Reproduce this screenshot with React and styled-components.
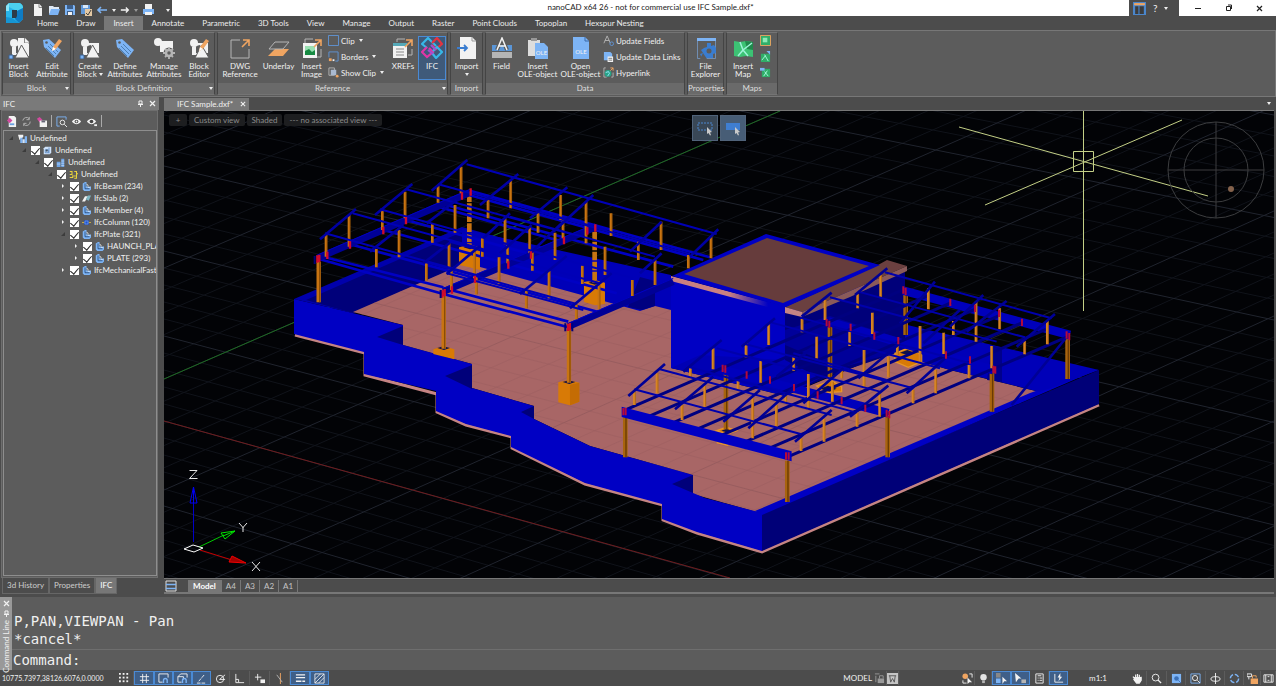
import React from "react"
import styled, { createGlobalStyle } from "styled-components"

const GlobalStyle = createGlobalStyle`
  * {
    box-sizing: border-box;
  }
  body {
    margin: 0;
    background: #4c4c4c;
    color: #f0f0f0;
    font-family: Lato, "Open Sans", sans-serif;
    font-size: 8px;
    line-height: 8px;
  }
  button, input {
    font: inherit;
    color: inherit;
    margin: 0;
    padding: 0;
    border: none;
    background: none;
  }
  svg {
    display: block;
    flex: none;
  }
`

/* ---------- icons ---------- */

const W = "#f2f2f2"
const B = "#7db4f5"
const O = "#f0a561"
const G = "#b5b5b5"

const Glyph = ({ s = 12, v = 12, children }) => (
  <svg width={s} height={s} viewBox={`0 0 ${v} ${v}`} fill="none">
    {children}
  </svg>
)

const Shapes = () => (
  <g fill={W}>
    <circle cx="6" cy="6" r="4" />
    <path d="M8 6h12v10H8zM4 10v8h8V8z" />
    <path d="M13.500 8l7.500 13H7z" stroke="#5c5c5c" />
  </g>
)
const Pencil = () => (
  <g>
    <path d="M12 10l6-8 3 2-6 8-4 2z" fill={O} />
    <path d="M12 10l3 2-4 2z" fill="#fff" />
  </g>
)
const Tag = () => (
  <g>
    <path d="M2 3l6-1 12 11-6 8L3 10z" fill={B} />
    <path d="M7 9l8 8M9 7l8 8M5 11l8 8" stroke="#41719f" strokeWidth=".8" />
    <circle cx="5.500" cy="5.500" r="1.300" fill="#5c5c5c" />
  </g>
)
const Corner = () => (
  <path d="M14 3h6v6M20 3l-7 7" stroke={O} strokeWidth="1.600" />
)
const MapTile = () => (
  <g>
    <path d="M2 4l6 1 6-1 7 1v15l-7-1-6 1-6-1z" fill="#3cc274" />
    <path d="M13 4l8 1v8l-6-1z" fill="#20884c" />
    <path d="M8 5l3 8-5 6M11 13l9-7M11 13l5 6" stroke="#9ef2d8" strokeWidth="1.500" />
  </g>
)

const big = {
  insertBlock: (
    <>
      <path d="M10 1h7l4 4v14H10z" fill={W} />
      <path d="M16.500 1v5H21" stroke="#888" />
      <Shapes />
      <path d="M1 18h4v4H1z" fill={B} stroke="#3c5f8a" />
    </>
  ),
  editAttr: (
    <>
      <Tag />
      <Pencil />
    </>
  ),
  createBlock: (
    <>
      <Shapes />
      <path d="M1 18h4v4H1z" fill={B} stroke="#3c5f8a" />
    </>
  ),
  define: <Tag />,
  manage: (
    <>
      <circle cx="5" cy="5" r="4" fill={W} />
      <path d="M7 4h13v11H7z" fill={W} />
      <circle cx="16" cy="16" r="5.500" fill="#5c5c5c" />
      <path
        d="M16 10v12M10 16h12M12 12l8 8M20 12l-8 8"
        stroke={G}
        strokeWidth="1.800"
      />
      <circle cx="16" cy="16" r="3" stroke={G} strokeWidth="2.500" fill="#5c5c5c" />
    </>
  ),
  editor: (
    <>
      <Shapes />
      <Pencil />
    </>
  ),
  dwg: (
    <>
      <path d="M11 3H2v18h18V12" stroke={G} />
      <Corner />
    </>
  ),
  underlay: (
    <>
      <path d="M7 12h14l-6 7H0z" fill={O} />
      <path d="M7 5h14l-6 7H1z" fill="#5c5c5c" stroke={G} />
    </>
  ),
  image: (
    <>
      <path d="M4 6V2h8M20 12v8h-4" stroke={G} />
      <path d="M2 6h14v15H2z" fill={W} />
      <path d="M4 9h10v9H4z" fill="#9ae0b2" />
      <path d="M4 18v-4l4-2 3 3 3-2v5z" fill="#178a42" />
      <Corner />
    </>
  ),
  xrefs: (
    <>
      <path d="M5 5V2h8M20 12v6h-4" stroke={G} />
      <path d="M1 6h14v15H1z" fill={W} />
      <path d="M1 6h14v3H1z" fill="#55a9b8" />
      <path d="M4 12h8M4 15h8M4 18h8" stroke="#888" />
      <Corner />
    </>
  ),
  ifc: (
    <g strokeWidth="2.200">
      <path d="M6 11L1 7l6-6 5 5 3 3" stroke="#37b8e8" />
      <path d="M11 6l5-5 5 6-6 5-4-4" stroke="#e5333f" />
      <path d="M6 10l-5 5 5 5 6-5-4-4" stroke="#e236a6" />
      <path d="M11 16l4 5 6-6-5-5-4 4" stroke="#37b8e8" />
      <path d="M7 13l5 4M10 8l5 5" stroke="#a34fd0" />
    </g>
  ),
  import: (
    <>
      <path d="M4 0h12l4 4v18H4z" fill={W} />
      <path d="M16 0v4h4" stroke="#999" />
      <path d="M1 11h10M8 8l3 3-3 3" stroke="#3a7dd0" strokeWidth="1.800" />
    </>
  ),
  field: (
    <>
      <path d="M1 8h20v6H1z" fill="#5a96d8" />
      <path d="M1 15h20v6H1z" fill={G} />
      <path d="M6 13l5-12 5 12" stroke="#5c5c5c" strokeWidth="4" />
      <path d="M6 13l5-12 5 12M7 9h8" stroke={W} strokeWidth="1.500" />
    </>
  ),
  insertOle: (
    <>
      <path d="M1 3h12v16H1z" fill="#ddd" />
      <path d="M4 1h6v3H4z" fill="#999" />
      <path d="M8 6h9l4 4v12H8z" fill={B} />
      <text x="14.500" y="18" fontSize="6" textAnchor="middle" fill={W}>
        OLE
      </text>
    </>
  ),
  openOle: (
    <>
      <path d="M3 0h12l4 4v18H3z" fill={B} />
      <path d="M15 0v4h4" stroke="#3c6ba8" />
      <text x="11" y="17" fontSize="6" textAnchor="middle" fill={W}>
        OLE
      </text>
    </>
  ),
  explorer: (
    <>
      <path d="M2.500 2.500h18v19h-18z" stroke="#7599c8" strokeWidth=".8" />
      <path d="M2 1h19v3H2z" fill={B} />
      <path
        d="M12 6h4v3l3-1 2 3v5l-3 1v4H7l-2-4 3-1-2-3 3-2 3-1z"
        fill="#3a7dd0"
      />
      <circle cx="14" cy="14" r="2.500" fill="#5c5c5c" />
      <path d="M5 22l3-6 4 6z" fill="#5c5c5c" />
    </>
  ),
  map: <MapTile />,
}

const small = {
  clip: <path d="M.5 .5h11v11H.5z" stroke="#5f95d8" />,
  borders: (
    <>
      <path d="M1 7V1h10v10H8" stroke="#5f95d8" />
      <path d="M1 8h3v3H1z" fill={O} />
      <path d="M5 9h2v2H5z" fill={W} />
    </>
  ),
  showClip: (
    <>
      <path d="M1 1h6v8H1z" stroke={G} />
      <path d="M3 3h6v6H3z" fill="#a9b9d0" />
      <circle cx="10" cy="10" r="1.500" fill={O} />
    </>
  ),
  updFields: (
    <>
      <path d="M1 9l3.500-8L8 9M2 6h5" stroke={G} />
      <circle cx="9.500" cy="9.500" r="2" stroke="#5f95d8" />
    </>
  ),
  updLinks: (
    <>
      <path d="M1 1h7l2 2v7H1z" fill={B} />
      <path d="M5 6h6v6H5z" fill={W} />
      <path d="M6 8h4M6 10h4" stroke="#555" strokeWidth=".8" />
    </>
  ),
  link: (
    <>
      <path d="M3 1H1v10h3M11 6v5H9" stroke={G} />
      <circle cx="5.500" cy="7" r="3.700" fill="#27a387" />
      <path d="M3 6l3-1 1 2-2 3" stroke="#9ee8ff" />
      <path d="M8 1h3v3M11 1L8 4" stroke={O} />
    </>
  ),
  map1: (
    <>
      <path d="M.5 .5h11v11H.5z" fill="#31ad68" stroke={O} />
      <path d="M3 3h5v5H3z" fill="#8eeab8" />
    </>
  ),
  map2: (
    <>
      <path d="M1 3h10v9H1z" fill="#31ad68" />
      <path d="M2 10l4-5M5 4l4 7" stroke="#a8ffe0" />
      <path d="M7 0h4v4z" fill={B} />
    </>
  ),
  map3: (
    <>
      <path d="M2 2h9v9H2z" fill="#31ad68" />
      <path d="M4 10l4-6M5 5l4 5" stroke="#a8ffe0" />
      <path d="M0 1h5v3H0z" fill={B} />
    </>
  ),
  newFile: (
    <>
      <path d="M2 0h5.500L10 3v9H2z" fill={W} />
      <path d="M7 0v3.500h3" stroke="#888" />
    </>
  ),
  open: (
    <>
      <path d="M1 10V2h4l1 1h5v2" fill="#dfe9f5" />
      <path d="M3 5h9l-2 6H1z" fill={B} />
    </>
  ),
  save: (
    <>
      <path d="M1 1h9l1 1v9H1z" fill={B} />
      <path d="M3 1h6v4H3zM3 7h6v4H3z" fill="#3e5f8a" />
      <path d="M4 8h4v3H4z" fill={W} />
    </>
  ),
  saveAll: (
    <>
      <path d="M1 1h9v9H1z" fill="#6298d8" />
      <path d="M3 1h5v3H3z" fill="#d9e7f7" />
      <path d="M5 5h7v7H5z" fill="#e3c7a2" />
      <path d="M6 9l2 2 3-5" stroke="#444" />
    </>
  ),
  undo: <path d="M11 6H2M5 3L2 6l3 3" stroke={B} strokeWidth="1.600" />,
  redo: <path d="M1 6h9M7 3l3 3-3 3" stroke={W} strokeWidth="1.600" />,
  print: (
    <>
      <path d="M3 0h7v5H3z" fill={W} />
      <path d="M1 5h11v5H1z" fill={B} />
      <path d="M3 8h7v3H3z" fill={W} />
    </>
  ),
  panelDoc: (
    <>
      <path d="M3 0h6l2 2v10H3z" fill={W} />
      <path d="M1 5l3-3 3 3-3 3z" fill="#d34aa0" />
      <path d="M4 8h5v2H4z" fill="#6aa0e0" />
    </>
  ),
  refresh: (
    <path d="M2 5a4 4 0 017-2M10 6a4 4 0 01-7 3M9 1v3H6M3 11V8h3" stroke={G} />
  ),
  panelSave: (
    <>
      <path d="M1 3l3-2 3 3-3 3z" fill="#d34aa0" />
      <path d="M4 5h8v7H4z" fill={W} />
      <path d="M6 5h4v2H6z" fill="#667" />
    </>
  ),
  zoomWin: (
    <>
      <path d="M4 11H1V1h10v3" stroke={B} />
      <circle cx="7" cy="7" r="2.500" stroke={W} />
      <path d="M9 9l3 3" stroke={W} />
    </>
  ),
  eye: (
    <>
      <path d="M1 6c3-4 7-4 10 0-3 4-7 4-10 0z" fill={W} />
      <circle cx="6" cy="6" r="2" fill="#444" />
      <circle cx="6" cy="6" r="1" fill={W} />
    </>
  ),
  eyeTree: (
    <>
      <path d="M1 6c3-4 7-4 10 0-3 4-7 4-10 0z" fill={W} />
      <circle cx="6" cy="6" r="2" fill="#444" />
      <path d="M9 9h3v2H9z" fill={W} />
    </>
  ),
  project: (
    <>
      <path d="M0 1h7v3L2 8z" fill={W} />
      <path d="M3 5h3v7H3zM9 3h3v9H9z" fill={B} />
      <path d="M6 7h3v5H6z" fill="#cfe2fa" />
    </>
  ),
  site: (
    <>
      <path d="M1 3l2-2h8v8l-2 2H1z" fill="#cfe2fa" />
      <path d="M3 5h4v4H3zM8 2v8" stroke="#4b7cb8" />
      <circle cx="5" cy="6" r="1.500" fill="#456" />
    </>
  ),
  building: (
    <>
      <path d="M1 5h5v7H1zM7 1h4v11H7z" fill="#6fa4e4" />
      <path d="M1 8h5M7 4h4M7 7h4M7 10h4" stroke="#cfe2fa" strokeWidth=".8" />
    </>
  ),
  storey: (
    <path
      d="M1 2h3v4H1M1 10h4V7M6 8h3M7 2h3v9H7M10 5h2"
      stroke="#e8d33c"
      strokeWidth="1.400"
    />
  ),
  part: (
    <>
      <path d="M1 2l3-2h2v6h6v4l-2 2H3l-2-2z" fill={B} />
      <path d="M4 2v7h6M7 6h3" stroke="#1f3d66" />
      <path d="M6 3l2 1v3h3" stroke={W} />
    </>
  ),
  slab: (
    <>
      <path d="M0 10l4-7h4l-4 7z" fill={W} />
      <path d="M5 7l3-5h4L9 9z" fill="#7fb7c4" />
    </>
  ),
  column: (
    <>
      <path d="M0 6h12" stroke="#e8c33c" />
      <path d="M3 3h6v6H3z" fill="#1f4fd0" />
      <path d="M4 4h4v4H4z" stroke={B} strokeWidth=".8" />
    </>
  ),
}

const st = {
  dots: (
    <g fill={W}>
      {[0, 4, 8].map((y) =>
        [0, 4, 8].map((x) => (
          <path key={`${x}-${y}`} d={`M${x} ${y}h2v2h-2z`} />
        ))
      )}
    </g>
  ),
  hash: <path d="M4 1v10M8 1v10M1 4h10M1 8h10" stroke={W} />,
  snap: (
    <>
      <path d="M5 10H1V1h10v4" stroke={W} />
      <path d="M6 11V8a2 2 0 014 0v3" stroke={B} strokeWidth="1.500" />
    </>
  ),
  snap3: (
    <>
      <path d="M5 10H1V4l3-3h7v4M1 4h6V7" stroke={W} />
      <path d="M6 11V8a2 2 0 014 0v3" stroke={B} strokeWidth="1.500" />
    </>
  ),
  track: <path d="M1 11h10M3 9l6-7" stroke={W} strokeDasharray="4 1" />,
  polar: (
    <>
      <circle cx="5.500" cy="6.500" r="4" stroke={W} />
      <path d="M5 7l6-5M5 7h6" stroke={W} />
    </>
  ),
  ortho: <path d="M2 1v9.500h9M2 7h3v3" stroke={W} />,
  dyn: (
    <>
      <path d="M4 1v7M1 4.500h7" stroke={W} />
      <path d="M7 7h5v4H7z" fill={W} />
    </>
  ),
  quick: (
    <>
      <path d="M7 0v12" stroke={O} />
      <path d="M3 2l6 8" stroke={G} />
    </>
  ),
  weight: (
    <path d="M1 2h10M1 5h10M1 9h6M8 9h3" stroke={W} strokeWidth="1.500" />
  ),
  hatch: (
    <path d="M1 1h10v10H1zM1 7l6-6M1 11L11 1M5 11l6-6" stroke={W} strokeWidth=".9" />
  ),
  lock: (
    <>
      <path d="M1 1h5M2 3v7" stroke="#999" />
      <path d="M4 6h7v5H4z" fill="#999" />
      <path d="M6 6V3h4v3" stroke="#999" />
    </>
  ),
  box: (
    <>
      <path d="M0 0h12v12H0z" fill="#c4c4c4" />
      <path d="M2 3h8M3 3l1 7 2-4 2 4 1-7" stroke="#555" />
    </>
  ),
  select: (
    <>
      <circle cx="3.500" cy="3.500" r="3" fill={O} />
      <path d="M8 1h3v4M1 8v3h4" stroke={W} />
      <path d="M6 5l5 5H8l-2 2z" fill={W} />
    </>
  ),
  bulb: (
    <>
      <circle cx="6" cy="4.500" r="3.500" fill="#e4e4e4" />
      <path d="M4.500 8h3v3h-3z" fill={G} />
    </>
  ),
  cycle: (
    <>
      <path d="M0 0h5v5H0z" fill="#888" />
      <path d="M0 6h5v5H0z" fill={B} />
      <path d="M7 4l5 5H9l-2 3z" fill={W} />
    </>
  ),
  hint: (
    <>
      <path d="M0 0l7 6H4l-3 4z" fill={W} />
      <path d="M7 7h5v4H7z" fill={G} />
    </>
  ),
  props: (
    <path d="M2 1h8v10H2zM4 3h4M4 5.500h1M6 5.500h3M4 8h1M6 8h3" stroke={W} />
  ),
  ucs: (
    <>
      <path d="M2 1v9h9" stroke={W} />
      <path d="M8 0L5 5h2l-1 4 4-5H8z" fill={W} />
    </>
  ),
  hand: (
    <path
      d="M3 6L1 4M4 6V1.500M6 6V1M8 6V2M10 7V4M3 5h7v3l-2 3H5L2 7z"
      stroke={W}
      strokeWidth="1.300"
      fill={W}
    />
  ),
  lens: (
    <>
      <circle cx="5" cy="5" r="3.700" stroke={W} />
      <path d="M7.500 7.500L11 11" stroke={W} strokeWidth="1.500" />
    </>
  ),
  extents: (
    <>
      <path d="M1 1h10v10H1z" fill={B} />
      <circle cx="6" cy="6" r="2.500" fill="#3a6fb5" />
      <path d="M8 8l3 3" stroke="#3a6fb5" />
    </>
  ),
  window: (
    <>
      <path d="M1 1h10v10H1z" stroke={B} />
      <circle cx="5.500" cy="5.500" r="2.800" stroke={W} />
      <path d="M8 8l3 3" stroke={W} />
    </>
  ),
  orbit: (
    <>
      <ellipse cx="6" cy="6.500" rx="5" ry="2.500" stroke={W} />
      <path d="M6 0v12" stroke={W} />
    </>
  ),
  sync: (
    <circle cx="6" cy="6" r="4.500" stroke={B} strokeWidth="1.500" strokeDasharray="5 2" />
  ),
  unlock: (
    <>
      <path d="M0 1h5v3H0zM2 4v3" stroke={W} />
      <path d="M4 6h8v6H4z" fill={O} />
      <path d="M6 6V3h4v2" stroke={O} />
    </>
  ),
  full: (
    <path d="M1 2h10v8H1zM3 2v8M9 2v8M5 4h2M5 8h2" stroke={W} />
  ),
}

/* ---------- title, tabs, ribbon ---------- */

const Shell = styled.div`
  display: flex;
  flex-direction: column;
  height: 100vh;
  overflow: hidden;
  background: #4c4c4c;
`

const Top = styled.header`
  display: grid;
  grid-template-columns: 28px 1fr;
  grid-template-rows: 16px 14px;
`

const Logo = styled.div`
  grid-row: span 2;
  padding: 3px 5px;
`

const TitleRow = styled.div`
  display: flex;
`

const QuickBar = styled.div`
  display: flex;
  align-items: center;
  width: 144px;
  padding-left: 4px;
  padding-top: 4px;
  gap: 4px;
`

const Title = styled.div`
  flex: 1;
  background: #fff;
  color: #222;
  text-align: center;
  line-height: 15px;
`

const HelpBox = styled.div`
  display: flex;
  align-items: center;
  width: 50px;
  gap: 7px;
  padding-left: 4px;
  font-size: 10px;
`

const WindowButtons = styled.div`
  display: flex;
  width: 97px;
  padding: 0 2px 0 4px;
  background: #fff;
  color: #222;
  justify-content: space-around;
  align-items: center;
`

const IconButton = styled.button`
  display: inline-flex;
  align-items: center;
  justify-content: center;
`

const Tabs = styled.nav`
  display: flex;
`

const Tab = styled.button`
  padding: 1px 9px 0;
  line-height: 13px;
  color: #ececec;
  background: ${({ $on }) => ($on ? "#777" : "transparent")};
`

const Ribbon = styled.div`
  display: flex;
  gap: 2px;
  height: 67px;
  padding: 1px;
  background: #5c5c5c;
  border: 1px solid #777;
`

const Group = styled.section`
  display: flex;
  flex-direction: column;
  width: ${({ $w }) => $w}px;
  height: 63px;
  border: 1px solid #747474;
  border-left-color: #444;
  border-right-color: #444;
`

const GroupBody = styled.div`
  flex: 1;
  display: flex;
  justify-content: center;
`

const GroupFoot = styled.div`
  position: relative;
  background: #6a6a6a;
  color: #ddd;
  text-align: center;
  line-height: 11px;
`

const Tool = styled.button`
  display: flex;
  flex-direction: column;
  align-items: center;
  justify-content: flex-start;
  gap: 3px;
  width: ${({ $w }) => $w}px;
  height: 44px;
  margin-top: 3px;
  padding-top: 1px;
  white-space: pre;
  background: ${({ $on }) => ($on ? "#3f5a7a" : "transparent")};
  outline: ${({ $on }) => ($on ? "1px solid #4a8ad4" : "none")};
  outline-offset: -1px;
`

const ToolList = styled.div`
  display: flex;
  flex-direction: column;
  width: ${({ $w }) => $w}px;
  padding-left: 1px;
`

const MiniTool = styled.button`
  display: flex;
  align-items: center;
  gap: 2px;
  height: 16px;
  padding-bottom: 1px;
  white-space: nowrap;
`

const Caret = styled.span`
  display: inline-block;
  border: 2px solid transparent;
  border-top: 3px solid ${({ $c }) => $c || "#eee"};
  border-bottom: 0;
  vertical-align: middle;
  margin-left: ${({ $gap }) => $gap || 0}px;
`

const FootCaret = styled(Caret)`
  position: absolute;
  right: 1px;
  top: 4px;
`

const GROUPS = [
  {
    name: "Block",
    w: 69,
    more: true,
    tools: [
      ["insertBlock", "Insert\nBlock", 31],
      ["editAttr", "Edit\nAttribute", 36],
    ],
  },
  {
    name: "Block Definition",
    w: 142,
    more: true,
    tools: [
      ["createBlock", "Create\nBlock", 32, "inline"],
      ["define", "Define\nAttributes", 38],
      ["manage", "Manage\nAttributes", 40],
      ["editor", "Block\nEditor", 30],
    ],
  },
  {
    name: "Reference",
    w: 231,
    more: true,
    tools: [
      ["dwg", "DWG\nReference", 42],
      ["underlay", "Underlay", 35],
      ["image", "Insert\nImage", 31],
      {
        w: 61,
        items: [
          ["clip", "Clip", true],
          ["borders", "Borders", true],
          ["showClip", "Show Clip", true],
        ],
      },
      ["xrefs", "XREFs", 30],
      ["ifc", "IFC", 28, "on"],
    ],
  },
  { name: "Import", w: 33, tools: [["import", "Import", 31, "below"]] },
  {
    name: "Data",
    w: 200,
    tools: [
      ["field", "Field", 29],
      ["insertOle", "Insert\nOLE-object", 43],
      ["openOle", "Open\nOLE-object", 43],
      {
        w: 81,
        items: [
          ["updFields", "Update Fields"],
          ["updLinks", "Update Data Links"],
          ["link", "Hyperlink"],
        ],
      },
    ],
  },
  { name: "Properties", w: 37, tools: [["explorer", "File\nExplorer", 35]] },
  {
    name: "Maps",
    w: 52,
    tools: [
      ["map", "Insert\nMap", 31],
      { w: 18, items: [["map1", ""], ["map2", ""], ["map3", ""]] },
    ],
  },
]

const RibbonTool = ({ data: [icon, label, w, mode] }) => (
  <Tool $w={w} $on={mode === "on"}>
    <Glyph s={22} v={22}>
      {big[icon]}
    </Glyph>
    <span>
      {label}
      {mode === "inline" && <Caret $gap={2} />}
    </span>
    {mode === "below" && <Caret />}
  </Tool>
)

const RibbonBar = () => (
  <Ribbon>
    {GROUPS.map((g) => (
      <Group key={g.name} $w={g.w}>
        <GroupBody>
          {g.tools.map((t, i) =>
            t.items ? (
              <ToolList key={i} $w={t.w}>
                {t.items.map(([icon, label, drop]) => (
                  <MiniTool key={icon} aria-label={label || icon}>
                    <Glyph s={11}>{small[icon]}</Glyph>
                    {label}
                    {drop && <Caret $gap={2} />}
                  </MiniTool>
                ))}
              </ToolList>
            ) : (
              <RibbonTool key={i} data={t} />
            )
          )}
        </GroupBody>
        <GroupFoot>
          {g.name}
          {g.more && <FootCaret />}
        </GroupFoot>
      </Group>
    ))}
  </Ribbon>
)

/* ---------- IFC side panel ---------- */

const Workspace = styled.main`
  flex: 1;
  display: flex;
  min-height: 0;
  gap: 5px;
`

const Side = styled.aside`
  display: flex;
  flex-direction: column;
  flex: none;
  width: 159px;
`

const SideHead = styled.div`
  display: flex;
  align-items: center;
  height: 13px;
  padding: 0 3px;
  gap: 5px;
  background: #7a7a7a;

  span {
    flex: 1;
  }
`

const SideBody = styled.div`
  flex: 1;
  display: flex;
  flex-direction: column;
  min-height: 0;
  margin: 0 1px;
  padding: 1px 0 1px 1px;
  background: #5c5c5c;
  border: 1px solid #6e6e6e;
`

const SideTools = styled.div`
  display: flex;
  align-items: center;
  height: 18px;
  gap: 4px;
  padding-left: 3px;
`

const Divider = styled.i`
  width: 1px;
  height: 12px;
  background: #aaa;
`

const Tree = styled.div`
  flex: 1;
  overflow: hidden;
  border: 1px solid #8e8e8e;
  padding-top: 1px;
`

const TreeRow = styled.label`
  display: flex;
  align-items: center;
  height: 12px;
  gap: 3px;
  padding-left: ${({ $depth }) => 3 + $depth * 13}px;
  white-space: nowrap;
`

const Arrow = styled.span`
  flex: none;
  width: 8px;
  display: flex;
  justify-content: center;
`

const Check = styled.input`
  appearance: none;
  flex: none;
  width: 9px;
  height: 9px;
  background: #fff;
  display: grid;
  place-items: center;

  &:checked::after {
    content: "";
    width: 4px;
    height: 7px;
    border: solid #222;
    border-width: 0 1px 1px 0;
    transform: rotate(40deg);
    margin-bottom: 2px;
  }
`

const SideTabs = styled.div`
  display: flex;
  height: 16px;
  padding-left: 2px;
`

const SideTab = styled.button`
  padding: 0 4px;
  line-height: 15px;
  color: ${({ $on }) => ($on ? "#fff" : "#ccc")};
  background: ${({ $on }) => ($on ? "#777" : "transparent")};
  border: 1px solid #666;
  border-top: 0;
`

const TREE = [
  [0, "open", "project", "Undefined"],
  [1, "open", "site", "Undefined"],
  [2, "open", "building", "Undefined"],
  [3, "open", "storey", "Undefined"],
  [4, "shut", "part", "IfcBeam (234)"],
  [4, "shut", "slab", "IfcSlab (2)"],
  [4, "shut", "part", "IfcMember (4)"],
  [4, "shut", "column", "IfcColumn (120)"],
  [4, "open", "part", "IfcPlate (321)"],
  [5, "shut", "part", "HAUNCH_PLA"],
  [5, "shut", "part", "PLATE (293)"],
  [4, "shut", "part", "IfcMechanicalFast"],
]

const Pin = () => (
  <svg width="7" height="7" viewBox="0 0 7 7" fill="none" stroke="#f2f2f2">
    <path d="M2 1h3v3H2zM1 4.500h5M3.500 5v2" />
  </svg>
)

const Cross = ({ s = 7, c = "#f2f2f2" }) => (
  <svg width={s} height={s} viewBox="0 0 7 7" stroke={c}>
    <path d="M1 1l5 5M6 1L1 6" strokeWidth="1.200" />
  </svg>
)

const SidePanel = () => (
  <Side>
    <SideHead>
      <span>IFC</span>
      <IconButton aria-label="Pin">
        <Pin />
      </IconButton>
      <IconButton aria-label="Close panel">
        <Cross />
      </IconButton>
    </SideHead>
    <SideBody>
      <SideTools>
        {["panelDoc", "refresh", "panelSave"].map((n) => (
          <IconButton key={n} aria-label={n}>
            <Glyph s={11}>{small[n]}</Glyph>
          </IconButton>
        ))}
        <Divider />
        {["zoomWin", "eye", "eyeTree"].map((n) => (
          <IconButton key={n} aria-label={n}>
            <Glyph s={11}>{small[n]}</Glyph>
          </IconButton>
        ))}
        <Divider />
      </SideTools>
      <Tree>
        {TREE.map(([depth, state, icon, text], i) => (
          <TreeRow key={i} $depth={depth}>
            <Arrow>
              <svg width="6" height="6" viewBox="0 0 6 6">
                {state === "open" ? (
                  <path d="M5 1v4H1z" fill="#3c3c3c" />
                ) : (
                  <path d="M2 1l2 2-2 2z" fill="#f2f2f2" />
                )}
              </svg>
            </Arrow>
            {depth > 0 && <Check type="checkbox" defaultChecked />}
            <Glyph s={9}>{small[icon]}</Glyph>
            {text}
          </TreeRow>
        ))}
      </Tree>
    </SideBody>
    <SideTabs>
      <SideTab>3d History</SideTab>
      <SideTab>Properties</SideTab>
      <SideTab $on>IFC</SideTab>
    </SideTabs>
  </Side>
)

/* ---------- drawing area ---------- */

const Doc = styled.section`
  flex: 1;
  display: flex;
  flex-direction: column;
  min-width: 0;
  padding-right: 2px;
`

const DocTabs = styled.div`
  display: flex;
  align-items: center;
  justify-content: space-between;
  height: 14px;
  padding-right: 3px;
  border-bottom: 1px solid #777;
`

const DocTab = styled.div`
  display: flex;
  align-items: center;
  height: 12px;
  margin-top: 1px;
  padding: 0 3px 0 13px;
  gap: 7px;
  background: #777;
`

const Canvas = styled.div`
  position: relative;
  flex: 1;
  min-height: 0;
  overflow: hidden;
  background: #020306;

  > svg {
    width: 100%;
    height: 100%;
  }
`

const ViewControls = styled.div`
  position: absolute;
  top: 3px;
  left: 5px;
  display: flex;
  gap: 2px;
`

const ViewButton = styled.button`
  height: 12px;
  padding: 0 5px;
  min-width: 18px;
  border-radius: 2px;
  background: #1d1e20;
  color: #8c8c8c;
`

const PickModes = styled.div`
  position: absolute;
  top: 4px;
  left: 0;
  right: 0;
  display: flex;
  justify-content: center;
  gap: 2px;
`

const PickMode = styled.button`
  display: grid;
  place-items: center;
  width: 26px;
  height: 26px;
  border: 1px solid #50637a;
  background: ${({ $on }) => ($on ? "#475d76" : "#394756")};
`

const SheetTabs = styled.div`
  display: flex;
  align-items: center;
  height: 16px;
  border-top: 1px solid #777;
  border-bottom: 2px solid #777;
`

const Sheet = styled.button`
  height: 12px;
  padding: 0 ${({ $on }) => ($on ? 5 : 4)}px;
  color: ${({ $on }) => ($on ? "#fff" : "#c4c4c4")};
  background: ${({ $on }) => ($on ? "#777" : "transparent")};
  font-weight: ${({ $on }) => ($on ? 700 : 400)};
  border-right: 1px solid #777;
`

const range = (a, b) => Array.from({ length: b - a + 1 }, (_, i) => a + i)

const gridMinor = []
const gridMajor = []
range(-40, 34).forEach((i) => {
  const line = `M164 ${421 + i * 17}L1274 ${730 + i * 20.5}`
  ;(i % 5 === 0 ? gridMajor : gridMinor).push(line)
})
range(-14, 48).forEach((i) => {
  const line = `M164 ${379 + i * 22.2}L1274 ${-104 + i * 21}`
  ;(i % 5 === 0 ? gridMajor : gridMinor).push(line)
})

const BLUE = "#0000c4"
const NAVY = "#00007a"

const FLOOR =
  "M353 312L445 272L462 262L671 300V368L785 396L890 352L950 370L1040 392L760 513L693 494V475L590 446L534 419V406L472 388V364L403 345V325z"

const seg = (list) => list.map(([a, b, c, d]) => `M${a} ${b}L${c} ${d}`).join("")
const posts = (list) => list.map(([x, a, b]) => `M${x} ${a}V${b}`).join("")
const plates = (list) => list.map(([x, y]) => `M${x} ${y - 11}v22`).join("")

// wings are drawn at three times their size, each from its own corner
const WEST = {
  lowBeams: [
    [120, 318, 490, 412], [120, 328, 490, 432], [490, 414, 865, 515],
    [490, 432, 865, 532], [210, 283, 585, 384], [310, 240, 685, 342],
    [378, 210, 755, 313], [480, 160, 850, 262], [480, 172, 850, 276],
    [570, 122, 945, 226], [570, 136, 945, 240], [585, 384, 955, 486],
    [685, 342, 1010, 430], [850, 262, 1180, 350], [945, 226, 1290, 322],
    [945, 240, 1270, 330],
  ],
  cross: [
    [112, 325, 570, 128], [490, 425, 945, 232], [865, 530, 1180, 395],
  ],
  upper: [
    [135, 250, 600, 378], [218, 190, 700, 322], [300, 178, 800, 315],
    [378, 118, 880, 254], [475, 103, 980, 240], [560, 43, 1310, 252],
    [430, 335, 890, 462], [507, 275, 960, 400], [607, 262, 1060, 385],
    [690, 200, 1125, 320], [770, 185, 1230, 312], [500, 370, 910, 480],
  ],
  rafters: [
    [120, 268, 228, 177], [285, 195, 397, 102], [455, 122, 562, 30],
    [600, 165, 715, 72], [750, 205, 862, 112], [820, 245, 940, 135],
    [270, 305, 370, 225], [430, 340, 510, 278], [500, 372, 600, 288],
    [440, 220, 530, 150], [610, 265, 690, 190], [660, 310, 755, 225],
    [740, 320, 850, 215], [720, 432, 860, 318], [870, 475, 995, 370],
    [1050, 305, 1145, 215], [1080, 370, 1145, 310], [1230, 320, 1315, 238],
  ],
  posts: [
    [138, 255, 320], [207, 195, 290], [307, 180, 240], [375, 125, 205],
    [474, 108, 158], [543, 50, 130], [692, 92, 175], [624, 150, 205],
    [842, 135, 210], [774, 190, 248], [918, 155, 280], [849, 212, 265],
    [525, 165, 248], [457, 222, 278], [357, 240, 322], [289, 297, 352],
    [675, 205, 283], [607, 265, 320], [507, 280, 358], [439, 338, 392],
    [749, 228, 315], [683, 285, 340], [825, 248, 330], [757, 305, 362],
    [657, 322, 402], [583, 300, 385], [514, 360, 420], [589, 380, 433],
    [807, 362, 445], [739, 420, 475], [907, 347, 402], [889, 462, 508],
    [957, 405, 478], [993, 190, 258], [1143, 215, 300], [1075, 275, 330],
    [1293, 258, 325], [1225, 315, 355], [975, 290, 375], [1125, 330, 405],
    [1057, 390, 438],
  ],
  columns: [[116, 335, 457], [491, 430, 596], [867, 540, 698]],
  backColumns: [[568, 130, 290], [944, 245, 398]],
  plates: [
    [112, 327], [118, 325], [142, 316], [210, 285], [310, 242], [378, 212],
    [546, 138], [572, 126], [487, 432], [494, 428], [516, 420], [585, 388],
    [685, 345], [753, 315], [852, 272], [922, 243], [946, 234], [864, 532],
    [870, 530],
  ],
}

const EAST = {
  beams: [
    [805, 305, 1300, 450], [490, 450, 985, 580], [1030, 212, 1530, 345],
  ],
  cross: range(0, 7).map((k) => [
    200 + k * 70, 568 + k * 20, 1032 + k * 71, 208 + k * 20,
  ]),
  upper: [
    [300, 448, 815, 585], [223, 508, 725, 643], [470, 385, 960, 515],
    [390, 442, 890, 578], [635, 308, 1140, 445], [555, 372, 1060, 505],
    [720, 293, 1230, 430], [810, 232, 1310, 365], [895, 215, 1395, 352],
    [975, 157, 1475, 295], [700, 400, 980, 480],
  ],
  rafters: [
    [205, 528, 315, 432], [370, 455, 485, 360], [545, 380, 645, 295],
    [725, 290, 815, 218], [885, 225, 982, 145], [345, 568, 460, 470],
    [490, 605, 600, 510], [565, 625, 710, 495], [705, 665, 815, 570],
    [870, 590, 985, 497], [1040, 520, 1160, 410], [895, 475, 1020, 370],
    [730, 550, 850, 445], [1020, 310, 1125, 185], [1170, 320, 1270, 225],
    [1220, 335, 1340, 243], [1370, 380, 1485, 282], [1090, 370, 1200, 270],
    [650, 470, 760, 380], [1355, 555, 1525, 345],
  ],
  posts: [
    [223, 515, 555], [291, 460, 520], [391, 442, 475], [459, 385, 448],
    [558, 368, 412], [626, 310, 375], [726, 297, 337], [795, 240, 300],
    [893, 223, 265], [937, 278, 342], [869, 335, 378], [770, 350, 415],
    [701, 408, 452], [602, 422, 488], [534, 480, 512], [434, 497, 560],
    [366, 555, 600], [578, 535, 655], [649, 555, 620], [677, 520, 550],
    [745, 462, 570], [817, 485, 545], [845, 447, 475], [912, 390, 505],
    [792, 597, 665], [723, 655, 693], [891, 580, 620], [962, 165, 230],
    [1105, 205, 268], [1180, 303, 345], [1248, 245, 365], [1319, 265, 328],
    [1394, 363, 403], [1462, 303, 373], [1295, 378, 445], [1227, 435, 475],
    [1151, 338, 402], [1080, 318, 435], [985, 410, 472], [1012, 375, 405],
    [959, 522, 590], [1127, 450, 520], [1059, 510, 550],
  ],
  columns: [
    [196, 590, 712], [682, 722, 846], [983, 588, 712], [498, 460, 628],
    [810, 320, 475], [1037, 225, 345], [1296, 460, 575], [1523, 355, 477],
  ],
  plates: [
    [190, 575], [197, 575], [488, 445], [496, 447], [560, 465], [630, 480],
    [702, 503], [773, 525], [845, 542], [916, 565], [678, 708], [686, 708],
    [1030, 210], [1037, 214], [1171, 247], [1245, 265], [1317, 280],
    [1386, 307], [1520, 345], [1528, 350], [800, 308], [808, 313],
    [872, 322], [943, 348], [1015, 362], [1158, 405], [1230, 420],
    [1300, 448], [1306, 450], [980, 580], [988, 584],
  ],
}

const Model = () => (
  <svg viewBox="164 111 1110 467" preserveAspectRatio="xMinYMin slice" fill="none">
    <defs>
      <clipPath id="floorClip">
        <path d={FLOOR} />
      </clipPath>
      <linearGradient id="fascia" x1="0" x2="1" y1="0" y2="0">
        <stop offset="0.6" stopColor="#c98080" />
        <stop offset="1" stopColor={BLUE} />
      </linearGradient>
    </defs>
    <path d={gridMinor.join("")} stroke="#10131a" />
    <path d={gridMajor.join("")} stroke="#20242e" />
    <path d="M164 421L730 578" stroke="#6e1c1e" />
    <path d="M164 379L780 111" stroke="#1d6a22" />

    {/* perimeter walls and slab */}
    <path
      d="M295 334L365 352V374L437 393V411L466 424L512 436V447L585 483L663 504V519L697 532L762 551L1099 404"
      transform="translate(0 1)"
      stroke="#c58484"
      strokeWidth="3"
    />
    <path d="M294 299L462 227L680 287L671 320L440 290L353 313z" fill="#0000ac" />
    <path d="M306 300L462 232L480 262L445 272L353 313z" fill={NAVY} />
    <path d="M462 229L680 290V318L640 311L462 262z" fill="#0000b4" />
    <path d={FLOOR} fill="#a86666" />
    <g clipPath="url(#floorClip)" stroke="#985d5f">
      <path d={gridMinor.join("")} opacity=".45" />
      <path d={gridMajor.join("")} />
    </g>
    <path d="M462 262L640 311L655 306L671 310V275L462 229z" fill="#0000b8" />
    <path d="M640 277L655 281V306L642 310L628 307z" fill="#000080" />
    <path
      d="M294 299L403 325V345L472 364V388L534 406V419L590 446L693 475V493L705 498L762 513V551L697 532L662 519V504L585 483L511 447V436L466 424L436 411V391L364 374V352L294 334z"
      fill={BLUE}
    />
    <path
      d="M403 326L377 337L403 345zM472 365L445 376L472 389zM534 406L521 412L534 419zM693 475L672 484L693 493z"
      fill={NAVY}
    />
    <path d="M762 513L1099 370V404L762 551z" fill="#000078" />
    <path d="M755 511L1030 393L1099 369L762 515z" fill={BLUE} />
    <path d="M895 322L920 328L1099 370L1040 392L992 380L950 370L895 354z" fill="#0000b8" />
    <path d="M992 345L1002 348V382L987 380z" fill="#00008c" />

    {/* core block */}
    <path d="M785 310L905 272V350L840 372L785 396z" fill={NAVY} />
    <path d="M830 316L905 340V350L840 368L785 345V330z" fill="#00009a" />
    <path d="M671 276L785 306V396L671 368z" fill={BLUE} />
    <path d="M785 396L720 377L671 368L700 355L785 360L820 378z" fill="#0000b4" />
    <path d="M671 276L768 302V307L671 281z" fill="url(#fascia)" />
    <path d="M785 307L878 265L887 260L907 266L802 312z" fill="#6b4040" />
    <path d="M802 312L907 266V271L850 297L802 317z" fill="#8a5a5a" />
    <path d="M785 307L802 312V317L785 313z" fill="#c58484" />
    <path d="M766 234L880 265L786 307L672 276z" fill={BLUE} />
    <path d="M767 238L869 266L783 303L684 274z" fill="#663c3c" />

    <g transform="translate(280 150) scale(.3333)">
      <path
        d="M537 292L570 284L600 292V360L568 352L537 345zM912 396L945 390L975 398V462L945 466L912 456zM460 598L490 588L523 598V628L460 612zM835 697L865 690L898 698V755L870 766L835 757z"
        fill="#d87a06"
      />
      <path d="M870 704V766L898 755V698z" fill="#c46c04" />
      <path
        d="M550 292l18-5 20 5-18 6zM925 398l18-5 20 5-18 6zM472 594l18-5 20 5-18 6zM848 696l18-5 20 5-18 6z"
        fill="#10104a"
      />
      <path d={posts(WEST.backColumns)} stroke="#c87412" strokeWidth="14" strokeDasharray="26 4" />
      <path d={seg(WEST.lowBeams)} stroke={BLUE} strokeWidth="8" />
      <path d={seg(WEST.cross)} stroke="#000096" strokeWidth="20" />
      <path d={seg(WEST.cross)} stroke={BLUE} strokeWidth="3" transform="translate(0 -10)" />
      <path d={posts(WEST.posts)} stroke="#c87412" strokeWidth="8" />
      <path d={posts(WEST.posts)} stroke="#8a4c06" strokeWidth="2" transform="translate(3 0)" />
      <path d={seg(WEST.upper)} stroke="#0000b6" strokeWidth="6" />
      <path d={seg(WEST.rafters)} stroke="#0000a2" strokeWidth="8" />
      <path d={posts(WEST.columns)} stroke="#c87412" strokeWidth="13" />
      <path d={posts(WEST.columns)} stroke="#8a4c06" strokeWidth="4" transform="translate(3 0)" />
      <path d={plates(WEST.plates)} stroke="#d00a2c" strokeWidth="7" />
      <path d="M104 318v24M482 420v24M856 520v24M877 520v24" stroke={NAVY} strokeWidth="6" />
    </g>

    <g transform="translate(560 220) scale(.3333)">
      <path
        d="M470 632L500 622L530 632L500 642zM470 668L505 676M770 498L815 482L845 500L845 515L800 518zM1005 400L1050 382L1085 405V425L1045 442L1005 425z"
        fill="#d87a06"
        stroke="#e8962a"
        strokeWidth="4"
      />
      <path d="M1020 398l22-8 22 8-20 8zM780 506l24-9 26 9-22 9zM484 632l16-6 14 6-14 5z" fill="#10104a" />
      <path d={posts(EAST.columns)} stroke="#a8640e" strokeWidth="14" />
      <path d={posts(EAST.columns)} stroke="#6a3a04" strokeWidth="4" transform="translate(2 0)" />
      <path d={seg(EAST.beams)} stroke="#0000bc" strokeWidth="26" />
      <path d={seg(EAST.cross)} stroke="#000080" strokeWidth="9" />
      <path d={posts(EAST.posts)} stroke="#d88424" strokeWidth="8" />
      <path d={posts(EAST.posts)} stroke="#9a5a10" strokeWidth="2" transform="translate(3 0)" />
      <path d={seg(EAST.upper)} stroke="#0000ac" strokeWidth="6" />
      <path d={seg(EAST.rafters)} stroke="#000096" strokeWidth="8" />
      <path d="M185 560L695 694V724L185 591z" fill={BLUE} />
      <path d={plates(EAST.plates)} stroke="#b40a3c" strokeWidth="6" />
    </g>

    {/* cursor */}
    <g stroke="#c3cf86">
      <path d="M1083.500 111V311M959 127L1208 196M985 205L1182 120" />
      <path d="M1073.500 151.500h20v20h-20z" />
    </g>

    {/* orbit ring */}
    <g stroke="#3c3d3f">
      <circle cx="1216" cy="170" r="48" />
      <circle cx="1216" cy="170" r="32" />
      <path d="M1168 170h96M1216 122v96" />
    </g>
    <circle cx="1231" cy="189" r="3" fill="#84624c" />

    {/* UCS mark */}
    <path d="M193.500 542V488" stroke="#0000c8" />
    <path d="M193.500 487L190 503H197zM193.500 487V503" stroke="#0000f0" />
    <path d="M199 547L224 535" stroke="#00c800" />
    <path d="M235 531L221 533L225 539zM235 531L223 536" stroke="#00e400" />
    <path d="M200 550L232 560" stroke="#c80000" />
    <path d="M246 563L232 556L229 562z" fill="#a00000" stroke="#f00000" />
    <path d="M184 549L193 545L203 548L194 552z" stroke="#fff" />
    <g stroke="#e8e8e8">
      <path d="M189.500 470.500H197L189.500 478.500H197.500" />
      <path d="M239 523l4 4.500 4-4.500M243 527v5" />
      <path d="M252 562l8 9M260 562l-8 9" />
    </g>
  </svg>
)

const SheetMenu = styled(IconButton)`
  margin: 0 11px 0 1px;
`

const DrawingArea = () => (
  <Doc>
    <DocTabs>
      <DocTab>
        IFC Sample.dxf*
        <IconButton aria-label="Close drawing">
          <Cross s={6} />
        </IconButton>
      </DocTab>
      <Caret />
    </DocTabs>
    <Canvas>
      <Model />
      <ViewControls>
        <ViewButton>+</ViewButton>
        <ViewButton>Custom view</ViewButton>
        <ViewButton>Shaded</ViewButton>
        <ViewButton>--- no associated view ---</ViewButton>
      </ViewControls>
      <PickModes>
        <PickMode aria-label="Crossing">
          <Glyph s={18} v={18}>
            <path d="M2 4h14v7H2z" stroke="#4d86cc" strokeDasharray="2 1" />
            <path d="M11 8l5 5-2 .5L15 16l-1 .5-1.500-2.500-1.500 1z" fill="#c9c9c9" />
          </Glyph>
        </PickMode>
        <PickMode aria-label="Window" $on>
          <Glyph s={18} v={18}>
            <path d="M2 4h14v7H2z" fill="#3f7ed0" />
            <path d="M11 8l5 5-2 .5L15 16l-1 .5-1.500-2.500-1.500 1z" fill="#c9c9c9" />
          </Glyph>
        </PickMode>
      </PickModes>
    </Canvas>
    <SheetTabs>
      <SheetMenu aria-label="Layouts">
        <Glyph s={12}>
          <path d="M1 1h10v10H1z" stroke="#ddd" />
          <path d="M1 4.500h10M1 8.500h10" stroke={B} strokeWidth="1.500" />
        </Glyph>
      </SheetMenu>
      <Sheet $on>Model</Sheet>
      <Sheet>A4</Sheet>
      <Sheet>A3</Sheet>
      <Sheet>A2</Sheet>
      <Sheet>A1</Sheet>
    </SheetTabs>
  </Doc>
)

/* ---------- command line ---------- */

const Command = styled.section`
  display: flex;
  height: 73px;
  margin-top: 3px;
  background: #5c5c5c;
`

const Grip = styled.div`
  display: flex;
  flex-direction: column;
  align-items: center;
  width: 12px;
  padding-top: 3px;
  gap: 3px;
  background: #999;

  span {
    writing-mode: vertical-rl;
    transform: rotate(180deg);
    white-space: nowrap;
  }
`

const Console = styled.div`
  flex: 1;
  display: flex;
  flex-direction: column;
  font-family: "DejaVu Sans Mono", monospace;
  font-size: 14px;
  line-height: 18px;
`

const Log = styled.pre`
  flex: 1;
  margin: 0;
  padding: 15px 2px 0;
  font: inherit;
  border-bottom: 1px solid #6e6e6e;
`

const Prompt = styled.label`
  display: flex;
  align-items: center;
  height: 20px;
  padding-left: 1px;
  gap: 4px;

  input {
    flex: 1;
    outline: none;
  }
`

/* ---------- status bar ---------- */

const Status = styled.footer`
  display: flex;
  align-items: center;
  height: 16px;
  padding-left: 2px;
`

const Coords = styled.span`
  width: 113px;
  font-size: 7px;
`

const StatusIcon = styled.button`
  display: grid;
  place-items: center;
  width: ${({ $w }) => $w || 19}px;
  height: 14px;
  border-right: 1px solid #5c5c5c;
  ${({ $on }) => $on && "background: #3f5f88; border: 1px solid #4a8ad4;"}
`

const Spring = styled.span`
  flex: 1;
`

const Scale = styled.span`
  width: 60px;
  text-align: center;
`

const StatusGap = styled.span`
  width: 61px;
`

const Icons = ({ list }) =>
  list.map(([name, on, w]) => (
    <StatusIcon key={name} aria-label={name} $on={on} $w={w}>
      <Glyph s={11}>{st[name]}</Glyph>
    </StatusIcon>
  ))

const StatusBar = () => (
  <Status>
    <Coords>10775.7397,38126.6076,0.0000</Coords>
    <Icons
      list={[
        ["dots", 0], ["hash", 1, 20], ["snap", 1], ["snap3", 1], ["track", 1],
        ["polar", 0], ["ortho", 0, 20], ["dyn", 0, 20], ["quick", 0, 20],
        ["weight", 1, 20], ["hatch", 1],
      ]}
    />
    <Spring />
    MODEL
    <Icons list={[["lock", 0, 15], ["box", 0, 12]]} />
    <StatusGap />
    <Icons
      list={[
        ["select", 0, 15], ["bulb", 0, 17], ["cycle", 1], ["hint", 1],
        ["props", 0], ["ucs", 1],
      ]}
    />
    <Scale>m1:1</Scale>
    <Icons
      list={[
        ["hand", 0], ["lens", 0, 20], ["extents", 0], ["window", 0, 20],
        ["orbit", 0], ["sync", 0], ["unlock", 0, 17], ["full", 0, 15],
      ]}
    />
  </Status>
)

const MENU = [
  "Home", "Draw", "Insert", "Annotate", "Parametric", "3D Tools", "View",
  "Manage", "Output", "Raster", "Point Clouds", "Topoplan", "Hexspur Nesting",
]

const App = () => (
  <Shell>
    <GlobalStyle />
    <Top>
      <Logo>
        <svg width="18" height="22" viewBox="0 0 18 22">
          <path d="M1 3l3-3h9c3 0 5 2 5 5v11l-4 4H1z" fill="#28b4e8" />
          <path d="M1 3l3-3v8H1z" fill="#8be4f7" />
          <path d="M4 0h9c3 0 5 2 5 5l-6 3-8-4z" fill="#4cd0ee" />
          <path d="M12 8l6-3v11l-4 4-4-4z" fill="#0e7cc4" />
          <path d="M1 14l6 1 7 5H1z" fill="#1696d4" />
          <path d="M7 7h5v6l-1 2H7z" fill="#2e3b46" />
        </svg>
      </Logo>
      <TitleRow>
        <QuickBar>
          {["newFile", "open", "save", "saveAll", "undo"].map((n) => (
            <IconButton key={n} aria-label={n}>
              <Glyph>{small[n]}</Glyph>
            </IconButton>
          ))}
          <Caret />
          <IconButton aria-label="redo">
            <Glyph s={10}>{small.redo}</Glyph>
          </IconButton>
          <Caret $c="#999" />
          <IconButton aria-label="print">
            <Glyph>{small.print}</Glyph>
          </IconButton>
          <Caret $gap={8} />
        </QuickBar>
        <Title>nanoCAD x64 26 - not for commercial use IFC Sample.dxf*</Title>
        <HelpBox>
          <IconButton aria-label="Theme">
            <Glyph s={13}>
              <path d="M0 0h12v12H0z" fill="#4a86cc" />
              <path d="M2 4h3v7H2zM6 4h4v7H6z" fill="#3c3c3c" />
              <path d="M1 1h10v2H1z" fill={O} />
            </Glyph>
          </IconButton>
          ?
          <Caret />
        </HelpBox>
        <WindowButtons>
          <IconButton aria-label="Minimize">
            <Glyph s={8} v={8}>
              <path d="M1 4.500h6" stroke="#222" />
            </Glyph>
          </IconButton>
          <IconButton aria-label="Restore">
            <Glyph s={8} v={8}>
              <path d="M1.500 2.500h4v4h-4zM3 1h3.500v4" stroke="#222" />
            </Glyph>
          </IconButton>
          <IconButton aria-label="Close">
            <Cross c="#222" />
          </IconButton>
        </WindowButtons>
      </TitleRow>
      <Tabs>
        {MENU.map((m) => (
          <Tab key={m} $on={m === "Insert"}>
            {m}
          </Tab>
        ))}
      </Tabs>
    </Top>
    <RibbonBar />
    <Workspace>
      <SidePanel />
      <DrawingArea />
    </Workspace>
    <Command>
      <Grip>
        <Cross />
        <Pin />
        <span>Command Line</span>
      </Grip>
      <Console>
        <Log>{"P,PAN,VIEWPAN - Pan\n*cancel*"}</Log>
        <Prompt>
          Command:
          <input type="text" />
        </Prompt>
      </Console>
    </Command>
    <StatusBar />
  </Shell>
)

export default App
